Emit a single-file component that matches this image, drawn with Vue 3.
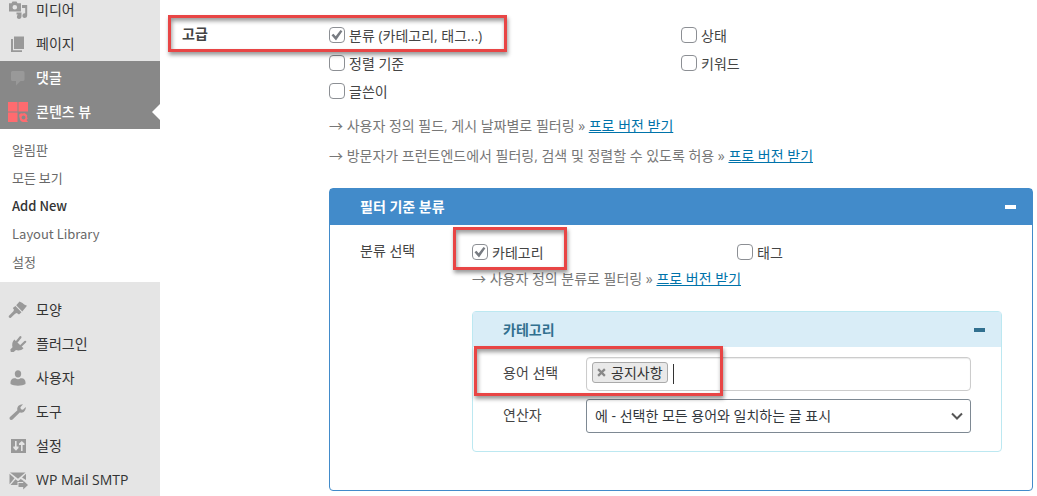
<script setup>
import { ref } from 'vue'

const topMenu = [
  { icon: 'media', label: '미디어' },
  { icon: 'pages', label: '페이지' },
  { icon: 'comments', label: '댓글', state: 'hovered' },
  { icon: 'views', label: '콘텐츠 뷰', state: 'current' },
]
const subMenu = [
  { label: '알림판' },
  { label: '모든 보기' },
  { label: 'Add New', active: true },
  { label: 'Layout Library' },
  { label: '설정' },
]
const bottomMenu = [
  { icon: 'appearance', label: '모양' },
  { icon: 'plugins', label: '플러그인' },
  { icon: 'users', label: '사용자' },
  { icon: 'tools', label: '도구' },
  { icon: 'settings', label: '설정' },
  { icon: 'mail', label: 'WP Mail SMTP' },
]
const icons = {
  media:
    '<path fill-rule="evenodd" d="M1 3.200h2.500L4.500 1.500h4l1 1.700H13v8.300H1zM6.800 5a2.300 2.300 0 1 0 0 4.600 2.300 2.300 0 0 0 0-4.600z"/><path d="M14 5h5.200v10.500a2.400 2.400 0 1 1-2-2.300V8H14z"/><path d="M8.500 12.600h5v4a2.300 2.300 0 1 1-1.900-2.200H8.500z"/>',
  pages: '<path d="M6 2.500h10V15H6z"/><path d="M3 5h2v11.200h9V18H3z"/>',
  comments: '<path d="M4.500 3H15a1.500 1.500 0 0 1 1.500 1.500v7A1.500 1.500 0 0 1 15 13h-2.500L8 17.500V13H4.500A1.500 1.500 0 0 1 3 11.500v-7A1.500 1.500 0 0 1 4.500 3z"/>',
  views:
    '<path d="M0 0h9.500v9.500H0zM10.500 0H20v9.500h-9.500zM0 10.500h9.500V20H0z"/><path fill-rule="evenodd" d="M11.200 12.500l1.800-1.200 1.800.3 1.700-.6 1.500 1 1.200 1.300-.2 1.700.7 1.500-1.200 1.500 1.500 2h-5l-1.500-.5-1.500-1.500-.3-1.700-.5-1.800zM15.500 13.500a2 2 0 1 0 0 4 2 2 0 0 0 0-4z"/>',
  appearance:
    '<path d="M14.500 3l1.700 1.500 2.800 1.200-4.700 5.700-6.100-6.100L11.500 1.500z"/><path d="M7.400 6.100l6.100 6.100-2.500 2.300-2.300-1.600-1.600.8-4.200 4c-1.200 1-3-.8-1.900-1.900l4.400-4.500.6-1.500-1.200-1.900z"/>',
  plugins:
    '<path d="M12.400 3.200L9 7.500M17.200 7.800L13 11.800" fill="none" stroke="#999" stroke-width="2.200" stroke-linecap="round"/><path d="M6.300 5.500l9.200 8.700c-1.700 2-4.800 2.600-7.500 1.900L5.700 18H2.800l-.5-2.500 2.200-2.200C3.800 10.500 4.300 7.500 6.300 5.500z"/>',
  users:
    '<path d="M10 2.200c2 0 3.200 1.500 3.200 3.500S12 9.600 10 9.600 6.800 7.700 6.800 5.700 8 2.200 10 2.200z"/><path d="M6.300 10.200h1.300c1.200 1.300 3.600 1.300 4.800 0h1.300c2.200 0 3.800 1.900 3.800 4.100V16c-3.500 2.300-11.500 2.300-15 0v-1.700c0-2.200 1.600-4.100 3.800-4.100z"/>',
  tools:
    '<path d="M17.500 7.200c-.9 2.900-3.200 4-5.800 3.400l-7.100 7c-1.700 1.500-4.100-.8-2.600-2.600l7.400-6.700c-.7-2.900.9-5.300 4-5.900l1.600-.1-2.600 2.900.5 2 2 .5 2.900-2.800c.1.800 0 1.500-.3 2.300z"/>',
  settings:
    '<path fill-rule="evenodd" d="M3 3h15v14H3zM7 5v5.500H5.300V12L8 14.700l2.500-2.700v-1.500H8.600V5zM13 15V9h-2V7.500L13.800 5l2.700 2.500V9h-1.900v6z"/>',
  mail:
    '<path d="M2 2.500h15.500L10 8.700z"/><path d="M1.500 3.800l5 4.500-5 6zM18 3.800V10l-4-2.500z"/><path d="M7.500 9.200L10 11.300l2.800-2.200 2.200 1.400v1.500H9.500v3h-7z"/><path d="M10.500 13h4.700v-2.500L20 15l-4.800 4.500V17h-4.700z"/>',
}

const advanced = ref([
  { label: '분류 (카테고리, 태그...)', checked: true },
  { label: '상태', checked: false },
  { label: '정렬 기준', checked: false },
  { label: '키워드', checked: false },
  { label: '글쓴이', checked: false },
])
const taxonomies = ref([
  { label: '카테고리', checked: true },
  { label: '태그', checked: false },
])
const upsells = [
  '→ 사용자 정의 필드, 게시 날짜별로 필터링 » ',
  '→ 방문자가 프런트엔드에서 필터링, 검색 및 정렬할 수 있도록 허용 » ',
]
const terms = ref(['공지사항'])
</script>

<template>
  <div class="page">
    <nav class="sidebar">
      <ul class="menu menu-top">
        <li v-for="m in topMenu" :key="m.label" :class="m.state">
          <a href="#"><svg viewBox="0 0 20 20" aria-hidden="true" v-html="icons[m.icon]"></svg>{{ m.label }}</a>
        </li>
      </ul>
      <ul class="submenu">
        <li v-for="s in subMenu" :key="s.label"><a href="#" :class="{ active: s.active }">{{ s.label }}</a></li>
      </ul>
      <ul class="menu menu-bottom">
        <li v-for="m in bottomMenu" :key="m.label">
          <a href="#"><svg viewBox="0 0 20 20" aria-hidden="true" v-html="icons[m.icon]"></svg>{{ m.label }}</a>
        </li>
      </ul>
    </nav>

    <main class="content">
      <section class="group">
        <h2 class="group-title">고급</h2>
        <div class="group-body">
          <div class="options">
            <label v-for="o in advanced" :key="o.label" class="option">
              <input v-model="o.checked" type="checkbox"><span>{{ o.label }}</span>
            </label>
          </div>
          <p v-for="u in upsells" :key="u" class="note">{{ u }}<a href="#">프로 버전 받기</a></p>
        </div>
        <span class="marker marker-advanced"></span>
      </section>

      <section class="panel">
        <header class="panel-head">
          <h3>필터 기준 분류</h3>
          <button type="button" class="toggle" aria-label="접기"></button>
        </header>
        <div class="panel-body">
          <div class="side-label">분류 선택</div>
          <div class="panel-main">
            <div class="options tax-options">
              <label v-for="t in taxonomies" :key="t.label" class="option">
                <input v-model="t.checked" type="checkbox"><span>{{ t.label }}</span>
              </label>
              <span class="marker marker-tax"></span>
            </div>
            <p class="note tax-note">→ 사용자 정의 분류로 필터링 » <a href="#">프로 버전 받기</a></p>

            <section class="subpanel">
              <header class="subpanel-head">
                <h4>카테고리</h4>
                <button type="button" class="toggle" aria-label="접기"></button>
              </header>
              <div class="fields">
                <label for="terms">용어 선택</label>
                <div class="token-box">
                  <span v-for="t in terms" :key="t" class="token">
                    <button type="button" aria-label="제거">
                      <svg viewBox="0 0 8 8" aria-hidden="true"><path d="M1 1l6 6M7 1L1 7" /></svg>
                    </button>{{ t }}
                  </span>
                  <span class="caret"></span>
                  <input id="terms" type="text">
                </div>
                <label for="operator">연산자</label>
                <select id="operator">
                  <option>에 - 선택한 모든 용어와 일치하는 글 표시</option>
                </select>
                <span class="marker marker-terms"></span>
              </div>
            </section>
          </div>
        </div>
      </section>
    </main>
  </div>
</template>

<style>
body {
  background: #fff;
  overflow: hidden;
}
</style>

<style scoped>
.page {
  display: flex;
  height: 100vh;
  overflow: hidden;
  font: 14px/20px "Open Sans", "Noto Sans CJK KR", sans-serif;
  color: #444;
}
.page * {
  box-sizing: border-box;
}
ul,
p,
h2,
h3,
h4 {
  margin: 0;
  padding: 0;
  list-style: none;
  font-size: 14px;
}

.sidebar {
  display: flex;
  flex: none;
  flex-direction: column;
  width: 160px;
  background: #e5e5e5;
}
.menu-top {
  margin-top: -7px;
}
.menu li {
  position: relative;
}
.menu a {
  display: flex;
  align-items: center;
  gap: 8px;
  height: 34px;
  padding-left: 8px;
  color: #333;
  text-decoration: none;
  white-space: nowrap;
}
.menu svg {
  flex: none;
  width: 20px;
  height: 20px;
  fill: #999;
}
.menu .hovered,
.menu .current {
  background: #888;
}
.menu .hovered a,
.menu .current a {
  color: #fff;
  font-weight: 500;
}
.menu .current svg {
  fill: #ff6b6f;
}
.menu .current::after {
  position: absolute;
  top: 9px;
  right: 0;
  border: 8px solid transparent;
  border-left: 0;
  border-right-color: #fff;
  content: "";
}
.submenu {
  padding: 7px 0 6px;
  background: #fff;
}
.submenu a {
  display: block;
  height: 28px;
  padding-left: 12px;
  color: #686868;
  font-family: "Noto Sans CJK KR", sans-serif;
  font-size: 13px;
  line-height: 28px;
  text-decoration: none;
}
.submenu .active {
  color: #333;
  font-weight: 500;
}
.menu-bottom {
  padding-top: 11px;
}

.content {
  flex: 1;
  min-width: 0;
  padding: 21px 4px 0 22px;
}
.group {
  position: relative;
  display: grid;
  grid-template-columns: 147px 1fr;
}
.group-title {
  padding-top: 3px;
  font-weight: 700;
}
.options {
  position: relative;
  display: grid;
  grid-template-columns: 1fr 1fr;
}
.option {
  display: flex;
  align-items: center;
  gap: 4px;
  height: 28px;
}
.option span {
  padding-top: 2px;
}
.option input {
  flex: none;
  width: 16px;
  height: 16px;
  margin: 0;
  appearance: none;
  border: 1px solid #8c8f94;
  border-radius: 4px;
  background: #fff;
}
.option input:checked {
  background: #fff url("data:image/svg+xml,%3Csvg xmlns='http://www.w3.org/2000/svg' viewBox='0 0 14 14'%3E%3Cpath d='M1.500 7.300l1.900-1.500 2.300 2.400 4.800-6.200 1.900 1.300-6.400 9.200z' fill='%23787c82'/%3E%3C/svg%3E") center / 14px 14px no-repeat;
}
.note {
  height: 30px;
  color: #777;
  line-height: 30px;
  white-space: nowrap;
}
.note a {
  color: #0073aa;
}
.group .options {
  padding-bottom: 6px;
}

.panel {
  margin: 17px 0 0 147px;
  border: 1px solid #428bca;
  border-radius: 4px;
}
.panel-head,
.subpanel-head {
  display: flex;
  align-items: center;
  justify-content: space-between;
  height: 36px;
  padding: 0 16px 0 30px;
}
.panel-head {
  background: #428bca;
  color: #fff;
}
.toggle {
  width: 11px;
  height: 4px;
  padding: 0;
  border: 0;
  background: #fff;
}
.panel-body {
  display: grid;
  grid-template-columns: 112px 1fr;
  padding: 13px 30px 38px;
}
.side-label {
  padding-top: 3px;
}
.note.tax-note {
  height: 27px;
  margin-bottom: 18px;
  line-height: 26px;
}
.subpanel {
  border: 1px solid #bce8f1;
  border-radius: 4px;
}
.subpanel-head {
  height: 35px;
  background: #d9edf7;
  color: #31708f;
}
.subpanel-head .toggle {
  background: #31708f;
}
.fields {
  position: relative;
  display: grid;
  grid-template-columns: 83px 1fr;
  gap: 8px 0;
  padding: 10px 30px 18px;
}
.fields label {
  padding-top: 6px;
}
.token-box {
  display: flex;
  align-items: flex-start;
  height: 34px;
  padding: 4px 5px;
  border: 1px solid #ccc;
  border-radius: 4px;
  box-shadow: inset 0 1px 1px rgba(0, 0, 0, 0.08);
}
.token {
  display: flex;
  align-items: center;
  gap: 5px;
  height: 21px;
  padding: 0 4px;
  border: 1px solid #aaa;
  border-radius: 3px;
  background: #e9e9e9;
  color: #333;
}
.token button {
  display: flex;
  padding: 0;
  border: 0;
  background: none;
}
.token svg {
  width: 9px;
  height: 9px;
  fill: none;
  stroke: #888;
  stroke-width: 2;
}
.caret {
  width: 1px;
  height: 20px;
  margin: 2px 0 0 5px;
  background: #333;
}
.token-box input {
  flex: 1;
  min-width: 0;
  height: 24px;
  padding: 0;
  border: 0;
  outline: 0;
  background: none;
  font: inherit;
}
select {
  width: 100%;
  height: 34px;
  padding: 0 24px 0 8px;
  appearance: none;
  border: 1px solid #7e8993;
  border-radius: 3px;
  background: #fff url("data:image/svg+xml,%3Csvg xmlns='http://www.w3.org/2000/svg' viewBox='0 0 12 8'%3E%3Cpath d='M1 1.500l5 5 5-5' fill='none' stroke='%23555' stroke-width='2'/%3E%3C/svg%3E") right 7px center / 12px 8px no-repeat;
  color: #32373c;
  font: inherit;
}

.marker {
  position: absolute;
  border: 3px solid #e84545;
  box-shadow: 1px 3px 4px rgba(0, 0, 0, 0.4), inset 1px 3px 4px rgba(0, 0, 0, 0.4);
  pointer-events: none;
}
.marker-advanced {
  top: -6px;
  left: -14px;
  width: 339px;
  height: 37px;
}
.marker-tax {
  top: -11px;
  left: -19px;
  width: 114px;
  height: 43px;
}
.marker-terms {
  top: -1px;
  left: 1px;
  width: 249px;
  height: 50px;
}
</style>
